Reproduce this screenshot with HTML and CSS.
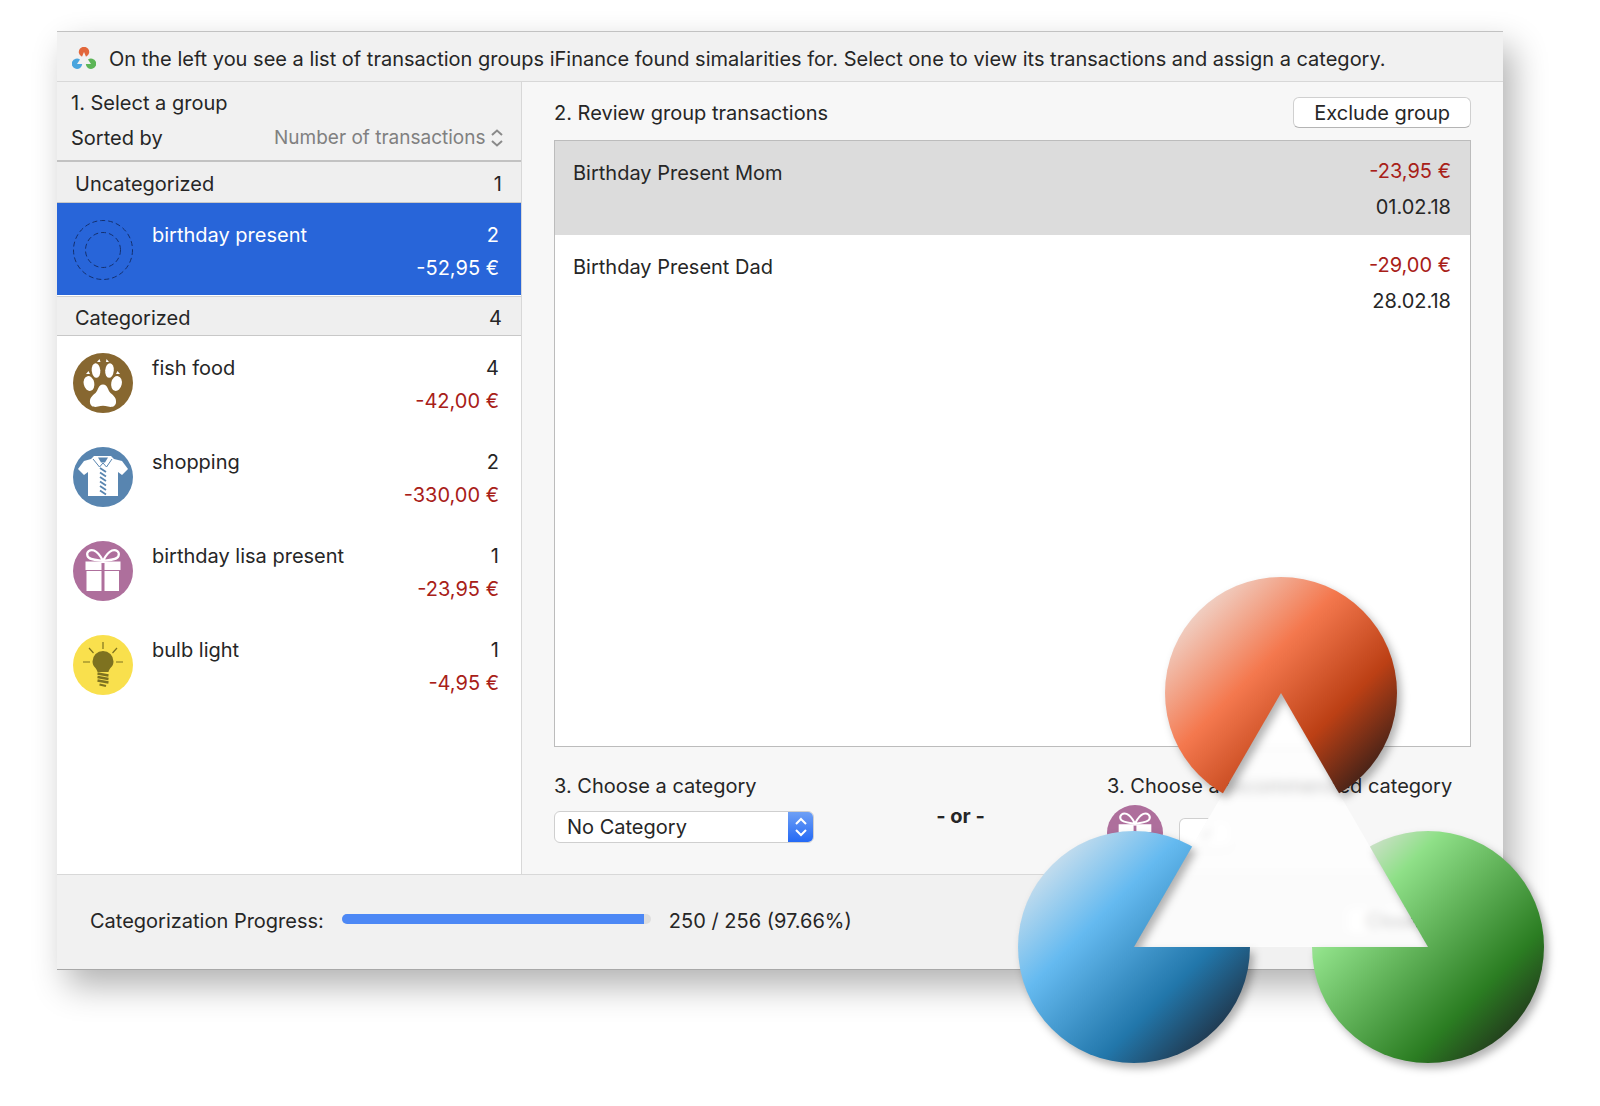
FILE: index.html
```html
<!DOCTYPE html>
<html lang="en">
<head>
<meta charset="utf-8">
<meta name="viewport" content="width=device-width, initial-scale=1">
<title>iFinance – Categorize transactions</title>
<link rel="stylesheet" href="styles.css">
</head>
<body>
<svg class="defs" aria-hidden="true">
  <symbol id="gift" viewBox="0 0 60 60">
    <circle cx="30" cy="30" r="30" fill="#ae6f9c"/>
    <path d="M30 20C24 19 16 19 14.500 15C13 11 17 8 21 9.500C26 11.500 28 16 30 20C32 16 34 11.500 39 9.500C43 8 47 11 45.500 15C44 19 36 19 30 20Z" fill="none" stroke="#fff" stroke-width="2.200"/>
    <path d="M12.500 20.500H47.500V29H31.500V22H28.500V29H12.500ZM13.500 30H28.500V50H13.500ZM31.500 30H46V50H31.500Z" fill="#fff"/>
  </symbol>
</svg>
<div class="stage">
  <main class="window">
    <header class="intro">
      <svg class="intro-logo" viewBox="0 0 24 23" aria-hidden="true">
        <path d="M12 5L10 9.800A5.200 5.200 0 1 1 14 9.800Z" fill="#e2673b"/>
        <path d="M5 17H10.200A5.200 5.200 0 1 1 8 12.500Z" fill="#4aa5de"/>
        <path d="M19 17H13.800A5.200 5.200 0 1 0 16 12.500Z" fill="#5cb557"/>
      </svg>
      <p>On the left you see a list of transaction groups iFinance found simalarities for. Select one to view its transactions and assign a category.</p>
    </header>
    <aside class="sidebar">
      <div class="sort">
        <h2>1. Select a group</h2>
        <div class="sort-row">
          <label for="sort">Sorted by</label>
          <span class="sort-pick">
            <select id="sort"><option>Number of transactions</option></select>
            <svg viewBox="0 0 12 18" aria-hidden="true"><path d="M1 6L6 1.500L11 6M1 12L6 16.500L11 12" fill="none" stroke="#8a8a8a" stroke-width="2"/></svg>
          </span>
        </div>
      </div>
      <h3 class="section"><span>Uncategorized</span><span>1</span></h3>
      <ul class="groups">
        <li class="group selected">
          <svg class="badge" viewBox="0 0 60 60" aria-hidden="true"><g fill="none" stroke="#14306e" stroke-dasharray="5 3"><circle cx="30" cy="30" r="29.500"/><circle cx="30" cy="30" r="17.500"/></g></svg>
          <span class="name">birthday present</span>
          <span class="figures"><span>2</span><span class="amount">-52,95 €</span></span>
        </li>
      </ul>
      <h3 class="section second"><span>Categorized</span><span>4</span></h3>
      <ul class="groups">
        <li class="group">
          <svg class="badge" viewBox="0 0 60 60" aria-hidden="true">
            <circle cx="30" cy="30" r="30" fill="#876730"/>
            <g fill="#fff">
              <ellipse cx="23" cy="17.500" rx="4.300" ry="7.300" transform="rotate(-5 23 17.500)"/>
              <ellipse cx="36.500" cy="17.500" rx="4.300" ry="7.300" transform="rotate(5 36.500 17.500)"/>
              <ellipse cx="16" cy="30.500" rx="5.300" ry="7.500" transform="rotate(-12 16 30.500)"/>
              <ellipse cx="43.500" cy="30.500" rx="5.300" ry="7.500" transform="rotate(12 43.500 30.500)"/>
              <path d="M30 31.500C35 31.500 34.500 37 37.500 40C41 43 43.500 45 43 49.500C42.500 54 38 54.500 35 53.500C31.500 52.500 28.500 52.500 25 53.500C22 54.500 17.500 54 17 49.500C16.500 45 19 43 22.500 40C25.500 37 25 31.500 30 31.500Z"/>
              <path d="M24 9L26.500 6L27.500 9ZM33 9L33.500 6L36 9ZM13 21L15.500 18L17 21ZM43 21L44.500 18L47 21Z"/>
            </g>
          </svg>
          <span class="name">fish food</span>
          <span class="figures"><span>4</span><span class="amount">-42,00 €</span></span>
        </li>
        <li class="group">
          <svg class="badge" viewBox="0 0 60 60" aria-hidden="true">
            <circle cx="30" cy="30" r="30" fill="#5885b0"/>
            <path d="M21 9H38L41 12L49 14L55 22L49 28L45 25V49H15V25L11 28L5 22L11 14L18 12Z" fill="#fff"/>
            <path d="M20 12L26.500 20L30 16L33.500 20L39 12" fill="none" stroke="#5885b0" stroke-width="1"/>
            <path d="M25 10.500H35L32 15.500H28Z" fill="#5885b0"/>
            <path d="M27 21L33 25M27 25.500L33 29.500M27 30L33 34M27 34.500L33 38.500M27 39L33 43M27 43.500L33 47.500" stroke="#5885b0" stroke-width="1.800"/>
          </svg>
          <span class="name">shopping</span>
          <span class="figures"><span>2</span><span class="amount">-330,00 €</span></span>
        </li>
        <li class="group">
          <svg class="badge" aria-hidden="true"><use href="#gift"/></svg>
          <span class="name">birthday lisa present</span>
          <span class="figures"><span>1</span><span class="amount">-23,95 €</span></span>
        </li>
        <li class="group">
          <svg class="badge" viewBox="0 0 60 60" aria-hidden="true">
            <circle cx="30" cy="30" r="30" fill="#f9e04d"/>
            <path d="M24.500 37C24 33 19.500 32 19.500 26.500A10.500 10.500 0 0 1 40.500 26.500C40.500 32 36 33 35.500 37Z" fill="#7e7220"/>
            <path d="M30 7V14M16 13L20.500 18M44 13L39.500 18M10 27H17M43 27H50" stroke="#7e7220" stroke-width="1.200"/>
            <path d="M24.500 38.500L35.500 40.500M24.500 42L35.500 44M24.500 45.500L35.500 47.500M26.500 49.500L33 51" stroke="#7e7220" stroke-width="2.300"/>
          </svg>
          <span class="name">bulb light</span>
          <span class="figures"><span>1</span><span class="amount">-4,95 €</span></span>
        </li>
      </ul>
    </aside>
    <section class="review">
      <div class="review-head">
        <h2>2. Review group transactions</h2>
        <button class="push" type="button">Exclude group</button>
      </div>
      <ul class="transactions">
        <li class="current"><span class="title">Birthday Present Mom</span><span class="figures"><span class="amount">-23,95 €</span><span>01.02.18</span></span></li>
        <li><span class="title">Birthday Present Dad</span><span class="figures"><span class="amount">-29,00 €</span><span>28.02.18</span></span></li>
      </ul>
      <div class="choices">
        <div class="choice">
          <label for="category">3. Choose a category</label>
          <span class="popup">
            <select id="category"><option>No Category</option></select>
            <span class="popup-cap"><svg viewBox="0 0 14 20" aria-hidden="true"><path d="M2 7L7 2L12 7M2 13L7 18L12 13" fill="none" stroke="#fff" stroke-width="2"/></svg></span>
          </span>
        </div>
        <strong class="or">- or -</strong>
        <div class="choice">
          <h2>3. Choose a recommended category</h2>
          <div class="suggestion">
            <svg class="suggestion-icon" aria-hidden="true"><use href="#gift"/></svg>
            <button class="push" type="button" aria-label="Use this category"><svg viewBox="0 0 12 14" aria-hidden="true"><path d="M1 8L5 12L11 2" fill="none" stroke="#555" stroke-width="1.500"/></svg></button>
          </div>
        </div>
      </div>
    </section>
    <footer class="progress-bar">
      <label for="progress">Categorization Progress:</label>
      <progress id="progress" value="250" max="256"></progress>
      <span>250 / 256 (97.66%)</span>
      <button class="push close" type="button">Close</button>
    </footer>
  </main>
  <div class="logo" aria-hidden="true">
    <div class="logo-glass"></div>
    <svg viewBox="0 0 526 486">
      <defs>
        <linearGradient id="red" x1="0" y1="0" x2="1" y2="1"><stop offset=".14" stop-color="#f0d0c4"/><stop offset=".4" stop-color="#f4784e"/><stop offset=".66" stop-color="#bc4015"/><stop offset=".88" stop-color="#3c2018"/></linearGradient>
        <linearGradient id="blue" x1="0" y1="0" x2="1" y2="1"><stop offset=".12" stop-color="#cde0ed"/><stop offset=".36" stop-color="#65baf0"/><stop offset=".67" stop-color="#2277ab"/><stop offset=".88" stop-color="#203448"/></linearGradient>
        <linearGradient id="green" x1="0" y1="0" x2="1" y2="1"><stop offset=".14" stop-color="#d0e0cc"/><stop offset=".28" stop-color="#8fe088"/><stop offset=".71" stop-color="#2b7d22"/><stop offset=".88" stop-color="#22381c"/></linearGradient>
        <mask id="cut" maskUnits="userSpaceOnUse" x="0" y="0" width="526" height="486"><path d="M0 0H526V486H0Z" fill="#fff"/><path d="M263 116L116 370H410Z" fill="#000"/></mask>
      </defs>
      <g mask="url(#cut)">
        <circle cx="263" cy="116" r="116" fill="url(#red)"/>
        <circle cx="116" cy="370" r="116" fill="url(#blue)"/>
        <circle cx="410" cy="370" r="116" fill="url(#green)"/>
      </g>
    </svg>
  </div>
</div>
</body>
</html>
```

FILE: styles.css
```css
* { box-sizing: border-box; }
body {
  margin: 0;
  background: #fff;
  color: #262626;
  font: 20px/24px Inter, "Liberation Sans", sans-serif;
}
h2, h3, p, ul { margin: 0; padding: 0; font: inherit; }
ul { list-style: none; }
button, select { font: inherit; color: inherit; }
.defs { position: absolute; width: 0; height: 0; }

.stage {
  position: relative;
  min-height: 100vh;
  padding: 31px 97px 136px 57px;
  display: flex;
}
.window {
  flex: 1;
  display: grid;
  grid-template-columns: 465px 1fr;
  grid-template-rows: auto 1fr auto;
  background: #f7f7f7;
  border-top: 1px solid #c2c2c2;
  border-bottom: 1px solid #a8a8a8;
  box-shadow: 10px 16px 32px rgba(0, 0, 0, .3);
}

.intro {
  grid-column: 1 / -1;
  display: flex;
  align-items: center;
  gap: 13px;
  height: 50px;
  padding: 4px 15px 0;
  background: #f1f1f1;
  border-bottom: 1px solid #d8d8d8;
  white-space: nowrap;
}
.intro-logo { width: 24px; height: 23px; flex: none; }

.sidebar { background: #fff; border-right: 1px solid #d8d8d8; }
.sort {
  height: 80px;
  padding: 9px 18px 0 14px;
  background: #f1f1f1;
  border-bottom: 2px solid #c2c2c2;
}
.sort-row { display: flex; justify-content: space-between; margin-top: 11px; }
.sort-pick { display: flex; align-items: center; gap: 5px; color: #808080; font-size: 19px; }
.sort-pick svg { width: 12px; height: 18px; }
select { appearance: none; border: 0; padding: 0; background: none; }
.section {
  display: flex;
  justify-content: space-between;
  align-items: center;
  height: 41px;
  padding: 4px 19px 0 18px;
  background: #efefef;
  border-bottom: 1px solid #c8c8c8;
}
.second { height: 40px; margin-top: 1px; border-top: 1px solid #d0d0d0; }
.group {
  display: flex;
  align-items: flex-start;
  height: 94px;
  padding: 17px 22px 0 16px;
}
.badge { width: 60px; height: 60px; margin-right: 19px; flex: none; }
.name { flex: 1; padding-top: 3px; }
.figures { display: flex; flex-direction: column; text-align: right; }
.group .figures { gap: 9px; padding-top: 3px; }
.amount { color: #a82018; }
.selected { height: 92px; background: #2865d9; color: #fff; }
.selected .amount { color: #fff; }

.review { display: flex; flex-direction: column; padding: 15px 32px 31px; }
.review-head { display: flex; justify-content: space-between; align-items: center; }
.push {
  height: 31px;
  padding: 0 20px;
  border: 1px solid #d0d0d0;
  border-bottom-color: #b4b4b4;
  border-radius: 6px;
  background: #fff;
}
.transactions {
  flex: 1;
  margin-top: 12px;
  background: #fff;
  border: 1px solid #bcbcbc;
}
.transactions li {
  display: flex;
  justify-content: space-between;
  height: 94px;
  padding: 18px 19px 18px 18px;
}
.title { padding-top: 2px; }
.transactions .current { background: #dcdcdc; }
.transactions .figures { gap: 12px; }
.choices { display: flex; justify-content: space-between; margin-top: 27px; }
.choice { display: flex; flex-direction: column; gap: 13px; width: 364px; white-space: nowrap; }
.choice:first-child { width: 260px; }
.popup {
  display: flex;
  height: 32px;
  border: 1px solid #cfcfcf;
  border-radius: 6px;
  background: #fff;
  overflow: hidden;
}
.popup select { flex: 1; padding-left: 12px; }
.popup-cap {
  display: grid;
  place-items: center;
  width: 25px;
  background: linear-gradient(#6fa0f5, #2469f5);
}
.popup-cap svg { width: 14px; height: 20px; }
.or { align-self: center; padding-top: 14px; font-weight: 700; }
.suggestion { display: flex; align-items: center; gap: 16px; height: 44px; margin-bottom: -12px; }
.suggestion-icon { width: 56px; height: 56px; }
.suggestion svg { display: block; }
.suggestion .push svg { width: 12px; height: 14px; }

.progress-bar {
  grid-column: 1 / -1;
  display: flex;
  align-items: center;
  height: 95px;
  padding: 0 62px 2px 33px;
  background: #f1f1f1;
  border-top: 1px solid #d8d8d8;
}
progress {
  appearance: none;
  width: 309px;
  height: 10px;
  margin: 0 18px 4px;
  border: 0;
}
progress::-webkit-progress-bar { background: #dedede; border-radius: 5px; overflow: hidden; }
progress::-webkit-progress-value { background: #4d88f5; }
.close { margin-left: auto; }

.logo {
  position: absolute;
  right: 56px;
  bottom: 43px;
  width: 526px;
  height: 486px;
}
.logo svg {
  position: absolute;
  inset: 0;
  overflow: visible;
  filter: drop-shadow(4px 5px 4px rgba(0, 0, 0, .3));
}
.logo-glass {
  position: absolute;
  inset: 0;
  clip-path: polygon(50% 116px, 116px 370px, 410px 370px);
  background: rgba(255, 255, 255, .72);
  backdrop-filter: blur(5px);
}
```
